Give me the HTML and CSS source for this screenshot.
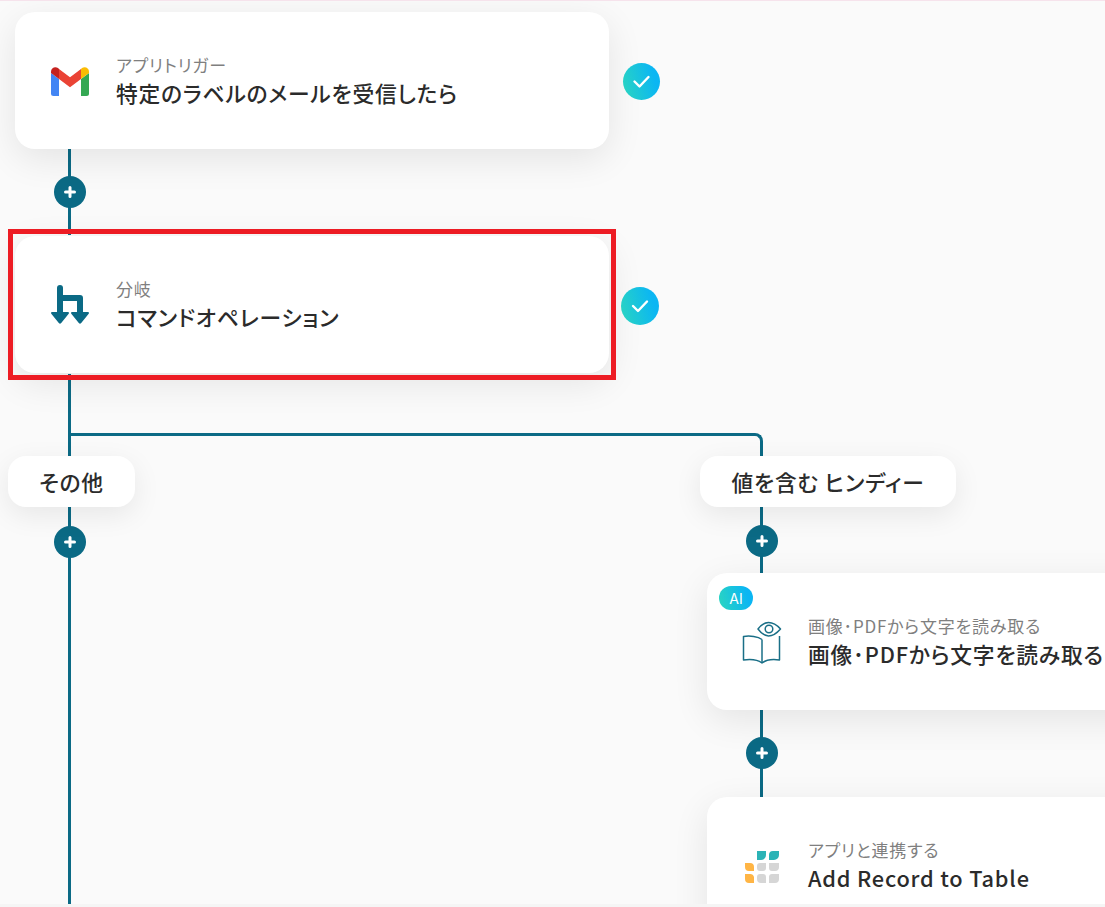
FILE: index.html
```html
<!DOCTYPE html>
<html lang="ja">
<head>
<meta charset="utf-8">
<title>フロー</title>
<link rel="stylesheet" href="styles.css">
</head>
<body>
<div class="canvas">
  <div class="line l-main1"></div>
  <div class="line l-main2"></div>
  <div class="line l-right"></div>
  <div class="branch"></div>

  <div class="plus p1"><svg viewBox="0 0 14 14" width="14" height="14"><path d="M7 2.500v9M2.500 7h9"/></svg></div>
  <div class="plus p2"><svg viewBox="0 0 14 14" width="14" height="14"><path d="M7 2.500v9M2.500 7h9"/></svg></div>
  <div class="plus p3"><svg viewBox="0 0 14 14" width="14" height="14"><path d="M7 2.500v9M2.500 7h9"/></svg></div>
  <div class="plus p4"><svg viewBox="0 0 14 14" width="14" height="14"><path d="M7 2.500v9M2.500 7h9"/></svg></div>

  <div class="card c1">
    <div class="icon">
      <svg viewBox="0 0 38 30" width="38" height="30" class="ic-gmail">
        <path fill="#4285f4" d="M2.500 29H8V12L0 6v20.500A2.500 2.500 0 0 0 2.500 29z"/>
        <path fill="#34a853" d="M30 29h5.500a2.500 2.500 0 0 0 2.500-2.500V6l-8 6z"/>
        <path fill="#fbbc04" d="M30 2v10l8-6V4.500c0-3.500-4-5.500-7-3.500z"/>
        <path fill="#ea4335" d="M8 12V2l11 8.200L30 2v10l-11 8.200z"/>
        <path fill="#c5221f" d="M0 4.500V6l8 6V2L7 1C4 -1 0 1 0 4.500z"/>
      </svg>
    </div>
    <div class="texts">
      <div class="sub">アプリトリガー</div>
      <div class="title">特定のラベルのメールを受信したら</div>
    </div>
  </div>
  <div class="check k1"><svg viewBox="0 0 37 37" width="37" height="37"><path d="M11.500 18.500l5 5 9-9.500"/></svg></div>

  <div class="card c2">
    <div class="icon">
      <svg viewBox="0 0 38 39" width="38" height="39" class="ic-branch">
        <path fill="none" stroke="#0b6a85" stroke-width="6" stroke-linecap="round" d="M9 3v25"/>
        <path fill="none" stroke="#0b6a85" stroke-width="6" stroke-linejoin="round" d="M9 13h20v15"/>
        <path fill="#0b6a85" d="M1 27h16a1 1 0 0 1 .7 1.700L10 38.300a1.500 1.500 0 0 1-2 0L.3 28.700A1 1 0 0 1 1 27zM21 27h16a1 1 0 0 1 .7 1.700L30 38.300a1.500 1.500 0 0 1-2 0l-7.700-9.600A1 1 0 0 1 21 27z"/>
      </svg>
    </div>
    <div class="texts">
      <div class="sub">分岐</div>
      <div class="title">コマンドオペレーション</div>
    </div>
  </div>
  <div class="highlight"></div>
  <div class="check k2"><svg viewBox="0 0 38 38" width="38" height="38"><path d="M12 19l5 5 9-9.500"/></svg></div>

  <div class="pill b1">その他</div>
  <div class="pill b2">値を含む ヒンディー</div>

  <div class="card c3">
    <div class="badge">AI</div>
    <div class="icon">
      <svg viewBox="0 0 40 44" width="40" height="44" fill="none" stroke="#1a6f87" stroke-width="1.500" stroke-linejoin="round">
        <path d="M20 18.500C16 15.500 8 14.500 1.500 15.500V39c7-1 14.500 0 18.500 3 4-3 11.500-4 17.500-3V15"/>
        <path d="M20 18.500V42"/>
        <path d="M16 8c3-4 6.500-6.500 10.500-6.500S35 4 38.500 8c-3.500 4-8 7-12 7S19 12 16 8z" fill="#fff"/>
        <circle cx="27" cy="8" r="3.800"/>
      </svg>
    </div>
    <div class="texts">
      <div class="sub">画像･PDFから文字を読み取る</div>
      <div class="title">画像･PDFから文字を読み取る</div>
    </div>
  </div>

  <div class="card c4">
    <div class="icon">
      <svg viewBox="0 0 34 32" width="34" height="32" class="ic-table">
        <path fill="#2bb3b6" d="M12 0h9v4a5 5 0 0 1-5 5h-4zM24 4a4 4 0 0 1 4-4h6v4a5 5 0 0 1-5 5h-5z"/>
        <path fill="#ffb545" d="M0 12h5a4 4 0 0 1 4 4v4H4a4 4 0 0 1-4-4zM0 23h5a4 4 0 0 1 4 3v6H4a4 4 0 0 1-4-4z"/>
        <path fill="#d6d6d6" d="M15 12h6v5a3 3 0 0 1-3 3h-3a3 3 0 0 1-3-3v-2a3 3 0 0 1 3-3zM24 12h10v4a4 4 0 0 1-4 4h-3a3 3 0 0 1-3-3zM15 23h3a3 3 0 0 1 3 3v6h-5a4 4 0 0 1-4-4v-2a3 3 0 0 1 3-3zM27 23h7v5a4 4 0 0 1-4 4h-6v-6a3 3 0 0 1 3-3z"/>
      </svg>
    </div>
    <div class="texts">
      <div class="sub">アプリと連携する</div>
      <div class="title">Add Record to Table</div>
    </div>
  </div>
</div>
<div class="footer-strip"></div>
</body>
</html>
```

FILE: styles.css
```css
html, body {
  margin: 0;
  padding: 0;
  height: 907px;
  overflow: hidden;
  background: #fafafa;
  font-family: "Noto Sans CJK JP", "Noto Sans", sans-serif;
  font-feature-settings: "palt";
  letter-spacing: 0.05em;
  color: #2b2b2b;
}

.canvas {
  position: relative;
  width: 1105px;
  height: 904px;
  overflow: hidden;
  border-top: 1px solid #f6e3ec;
  box-sizing: border-box;
}

.footer-strip {
  height: 3px;
  background: #f5f5f5;
}

.line {
  position: absolute;
  width: 3px;
  background: #0b6a85;
}

.l-main1 { left: 68px; top: 148px; height: 86px; }
.l-main2 { left: 68px; top: 373px; height: 531px; }
.l-right { left: 760px; top: 440px; height: 360px; }

.branch {
  position: absolute;
  left: 70px;
  top: 432px;
  width: 693px;
  height: 24px;
  box-sizing: border-box;
  border-top: 3px solid #0b6a85;
  border-right: 3px solid #0b6a85;
  border-top-right-radius: 8px;
}

.plus {
  position: absolute;
  width: 32px;
  height: 32px;
  border-radius: 50%;
  background: #0b6a85;
  display: flex;
  align-items: center;
  justify-content: center;
}

.plus svg { fill: none; stroke: #fff; stroke-width: 3; stroke-linecap: round; }

.p1 { left: 54px; top: 175px; }
.p2 { left: 54px; top: 525px; }
.p3 { left: 746px; top: 524px; }
.p4 { left: 746px; top: 736px; }

.card {
  position: absolute;
  box-sizing: border-box;
  background: #fff;
  border-radius: 20px;
  box-shadow: 0 10px 36px rgba(0, 0, 0, 0.09);
  display: flex;
  align-items: center;
  height: 137px;
}

.c1 { left: 15px; top: 11px; width: 594px; }
.c2 { left: 15px; top: 235px; width: 594px; }
.c3 { left: 707px; top: 572px; width: 440px; }
.c4 { left: 707px; top: 796px; width: 440px; }

.icon {
  width: 101px;
  flex: none;
  display: flex;
  justify-content: center;
  padding-left: 9px;
  padding-top: 2px;
  box-sizing: border-box;
}

.ic-branch { margin-top: -2px; }

.texts { display: flex; flex-direction: column; gap: 1px; }

.sub {
  font-size: 17px;
  line-height: 22px;
  color: #7f7f7f;
  white-space: nowrap;
}

.title {
  font-size: 21.750px;
  line-height: 31px;
  font-weight: 500;
  color: #2b2b2b;
  white-space: nowrap;
}

.highlight {
  position: absolute;
  left: 8px;
  top: 228px;
  width: 608px;
  height: 151px;
  box-sizing: border-box;
  border: 5px solid #ed1c24;
}

.check {
  position: absolute;
  border-radius: 50%;
  background: linear-gradient(75deg, #2bd6bf 0%, #0bb6f3 80%);
}

.check svg { display: block; fill: none; stroke: #fff; stroke-width: 2.400; stroke-linecap: round; stroke-linejoin: round; }

.k1 { left: 623px; top: 62px; width: 37px; height: 37px; }
.k2 { left: 621px; top: 286px; width: 38px; height: 38px; }

.pill {
  position: absolute;
  top: 455px;
  height: 51px;
  box-sizing: border-box;
  background: #fff;
  border-radius: 18px;
  box-shadow: 0 8px 28px rgba(0, 0, 0, 0.08);
  display: flex;
  align-items: center;
  justify-content: center;
  font-size: 21.750px;
  font-weight: 500;
  white-space: nowrap;
}

.b1 { left: 8px; width: 127px; }
.b2 { left: 700px; width: 256px; }

.badge {
  position: absolute;
  left: 12px;
  top: 13px;
  width: 34px;
  height: 24px;
  border-radius: 12px;
  background: linear-gradient(75deg, #2bd6bf 0%, #0bb6f3 80%);
  color: #fff;
  font-size: 14px;
  letter-spacing: 0;
  font-family: "Inter", sans-serif;
  display: flex;
  align-items: center;
  justify-content: center;
}
```
